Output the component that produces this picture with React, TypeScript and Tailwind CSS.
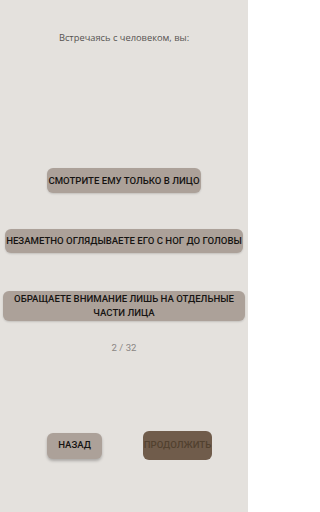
import React from "react";

export default function App() {
  return (
    <div
      className="w-[248px] h-[512px] bg-[#e4e1dd] flex flex-col items-center"
      style={{ fontFamily: "Roboto, 'Open Sans', sans-serif" }}
    >
      <div className="mt-[32px] text-[9.3px] leading-[12px] text-[#555250]" style={{ fontFamily: "'Open Sans', Roboto, sans-serif" }}>
        Встречаясь с человеком, вы:
      </div>

      <button className="mt-[124px] h-[25px] px-[1px] rounded-[6px] bg-[#aca199] text-[#161412] text-[9.6px] font-medium leading-[12px] shadow-[0_1px_2px_rgba(0,0,0,0.15)] whitespace-nowrap">
        СМОТРИТЕ ЕМУ ТОЛЬКО В ЛИЦО
      </button>

      <button className="mt-[36px] h-[24px] px-[1px] rounded-[6px] bg-[#aca199] text-[#161412] text-[9.6px] font-medium leading-[12px] shadow-[0_1px_2px_rgba(0,0,0,0.15)] whitespace-nowrap">
        НЕЗАМЕТНО ОГЛЯДЫВАЕТЕ ЕГО С НОГ ДО ГОЛОВЫ
      </button>

      <button className="mt-[38px] w-[242px] h-[30px] px-[10px] rounded-[6px] bg-[#aca199] text-[#161412] text-[9.6px] font-medium leading-[14px] shadow-[0_1px_2px_rgba(0,0,0,0.15)]">
        ОБРАЩАЕТЕ ВНИМАНИЕ ЛИШЬ НА ОТДЕЛЬНЫЕ ЧАСТИ ЛИЦА
      </button>

      <div className="mt-[21px] text-[9.6px] leading-[12px] text-[#8a8683]">2 / 32</div>

      <div className="mt-[77px] w-full flex items-center">
        <button className="ml-[47px] w-[55px] h-[26px] rounded-[6px] bg-[#aca199] text-[#161412] text-[9.6px] font-medium shadow-[0_2px_3px_rgba(0,0,0,0.25)]">
          НАЗАД
        </button>
        <button className="ml-[41px] w-[69px] h-[29px] rounded-[6px] bg-[#705c4b] text-[#52412f] text-[9.6px] font-medium whitespace-nowrap overflow-visible flex items-center justify-center">
          ПРОДОЛЖИТЬ
        </button>
      </div>
    </div>
  );
}
